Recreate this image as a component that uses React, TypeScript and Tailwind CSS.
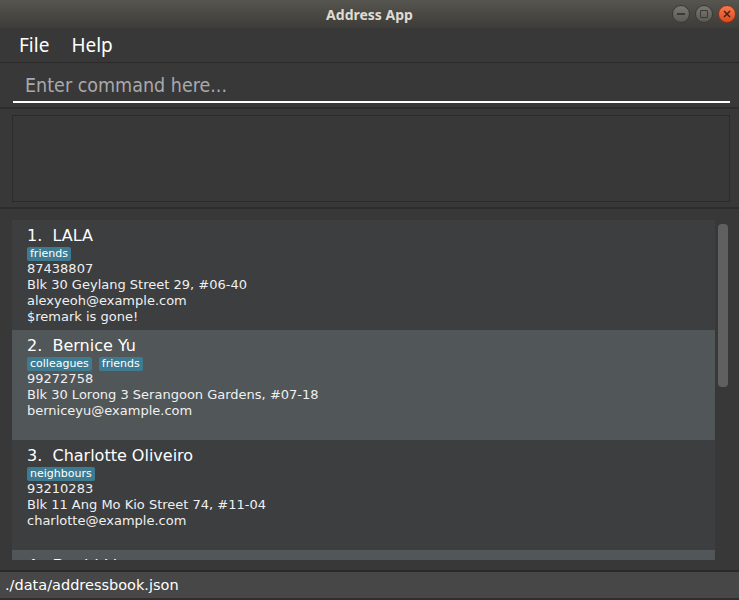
import React from "react";

type Person = {
  name: string;
  tags: string[];
  phone: string;
  address: string;
  email: string;
  remark?: string;
};

const people: Person[] = [
  {
    name: "LALA",
    tags: ["friends"],
    phone: "87438807",
    address: "Blk 30 Geylang Street 29, #06-40",
    email: "alexyeoh@example.com",
    remark: "$remark is gone!",
  },
  {
    name: "Bernice Yu",
    tags: ["colleagues", "friends"],
    phone: "99272758",
    address: "Blk 30 Lorong 3 Serangoon Gardens, #07-18",
    email: "berniceyu@example.com",
  },
  {
    name: "Charlotte Oliveiro",
    tags: ["neighbours"],
    phone: "93210283",
    address: "Blk 11 Ang Mo Kio Street 74, #11-04",
    email: "charlotte@example.com",
  },
  {
    name: "David Li",
    tags: ["family"],
    phone: "91031282",
    address: "Blk 436 Serangoon Gardens Street 26, #16-43",
    email: "lidavid@example.com",
  },
];

const WindowButtons = () => (
  <div className="flex items-center gap-[5px] pr-[3px]">
    <div className="w-[18px] h-[18px] rounded-full bg-gradient-to-b from-[#7a7873] to-[#5a5954] border border-[#3a3936] flex items-center justify-center">
      <div className="w-[8px] h-[2px] bg-[#3b3a37]" />
    </div>
    <div className="w-[18px] h-[18px] rounded-full bg-gradient-to-b from-[#7a7873] to-[#5a5954] border border-[#3a3936] flex items-center justify-center">
      <div className="w-[8px] h-[8px] border-[1.5px] border-[#3b3a37] rounded-[1px]" />
    </div>
    <div className="w-[18px] h-[18px] rounded-full bg-gradient-to-b from-[#f27a4f] to-[#de4a1c] border border-[#8a3216] flex items-center justify-center">
      <svg width="8" height="8" viewBox="0 0 8 8">
        <path d="M1 1L7 7M7 1L1 7" stroke="#4a2012" strokeWidth="1.6" />
      </svg>
    </div>
  </div>
);

const PersonCard = ({ person, index }: { person: Person; index: number }) => (
  <div
    className={`h-[110px] shrink-0 pl-[15px] pt-[6px] text-white ${
      index % 2 === 0 ? "bg-[#3c3e3f]" : "bg-[#515658]"
    }`}
    style={{ fontFamily: "'DejaVu Sans', sans-serif" }}
  >
    <div className="text-[16px] leading-[20px] text-white">
      {index + 1}.&nbsp; {person.name}
    </div>
    <div className="flex gap-[7px] mt-[1px] h-[14px]">
      {person.tags.map((t) => (
        <span
          key={t}
          className="bg-[#3e7b91] text-[11px] leading-[14px] px-[3px] rounded-[2px] text-white"
        >
          {t}
        </span>
      ))}
    </div>
    <div className="text-[13px] leading-[16px] text-[#f0f0f0]">
      <div>{person.phone}</div>
      <div>{person.address}</div>
      <div>{person.email}</div>
      {person.remark && <div>{person.remark}</div>}
    </div>
  </div>
);

export default function App() {
  return (
    <div className="w-[739px] h-[600px] bg-[#383838] flex flex-col overflow-hidden">
      {/* title bar */}
      <div className="h-[28px] shrink-0 relative flex items-center justify-end bg-gradient-to-b from-[#57554f] to-[#3d3c38]">
        <div
          className="absolute inset-0 flex items-center justify-center text-[14px] font-bold text-[#dfdbd2]"
          style={{ fontFamily: "'Noto Sans', sans-serif" }}
        >
          Address App
        </div>
        <WindowButtons />
      </div>

      {/* menu */}
      <div
        className="h-[35px] shrink-0 flex items-center gap-[22px] pl-[19px] text-[19px] text-white border-b border-[#2a2a2a]"
        style={{ fontFamily: "'Noto Sans', sans-serif" }}
      >
        <span>File</span>
        <span>Help</span>
      </div>

      {/* command box */}
      <div className="h-[46px] shrink-0 px-[13px] pr-[9px] border-b-2 border-[#2d2d2d] pt-[9px]">
        <div
          className="h-[31px] border-b-2 border-white pl-[12px] text-[19.5px] leading-[28px] text-[#a9a9ad]"
          style={{ fontFamily: "'DejaVu Sans Condensed', 'DejaVu Sans', sans-serif" }}
        >
          Enter command here...
        </div>
      </div>

      {/* result display */}
      <div className="h-[100px] shrink-0 px-[12px] pr-[9px] pt-[6px] border-b-2 border-[#2d2d2d]">
        <div className="h-[87px] border border-[#2b2b2b] bg-[#383838]" />
      </div>

      {/* person list */}
      <div className="flex-1 min-h-0 flex pt-[11px] pl-[12px] pb-[10px] border-b-2 border-[#2a2a2a]">
        <div className="w-[703px] flex flex-col overflow-hidden">
          {people.map((p, i) => (
            <PersonCard key={p.name} person={p} index={i} />
          ))}
        </div>
        <div className="w-[3px]" />
        <div className="w-[10px] pt-[4px]">
          <div className="h-[163px] w-[10px] rounded-[4px] bg-[#606060]" />
        </div>
      </div>

      {/* status bar */}
      <div
        className="h-[28px] shrink-0 bg-[#474747] pl-[5px] text-[14.5px] leading-[27px] text-white border-b-2 border-[#2e2e2e]"
        style={{ fontFamily: "'DejaVu Sans', sans-serif" }}
      >
        ./data/addressbook.json
      </div>
    </div>
  );
}
